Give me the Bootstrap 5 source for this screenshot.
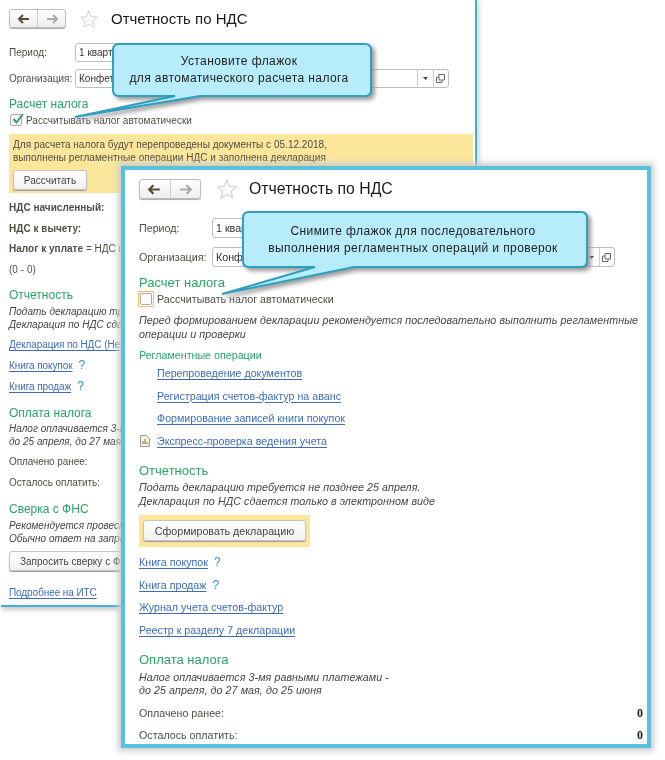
<!DOCTYPE html>
<html lang="ru"><head><meta charset="utf-8"><title>Отчетность по НДС</title>
<link href="https://cdn.jsdelivr.net/npm/bootstrap@5.3.0/dist/css/bootstrap.min.css" rel="stylesheet">
<style>
html,body{margin:0;background:#fff;width:665px;height:760px;overflow:hidden}
body{font-family:"Liberation Sans",Arial,sans-serif;color:#4f4f45;position:relative}
.win{position:absolute;background:#fff;overflow:hidden}
.win-back{left:0;top:0;width:477px;height:607px;font-size:10px;letter-spacing:.02px;padding:9px 0 0 9px;border-right:2px solid #3fb1d6;box-shadow:0 5px 5px -2px #ccc,3px 0 4px #ddd}
.win-back::after{content:"";position:absolute;left:1px;right:0;bottom:0;height:2px;background:#3fb1d6}
.win-front{left:121px;top:166px;width:530px;height:582px;font-size:10.7px;letter-spacing:0;padding:9px 0 0 14px;border:4px solid #5ac1dc;box-shadow:0 0 6px 3px #ccc}
.navgrp{display:flex;width:57px;height:19px;border:1px solid #bdbdbd;border-radius:3px;background:linear-gradient(#fff,#eee);box-shadow:0 1px 1px #aaa}
.win-front .navgrp{width:62px;height:20px}
.navcell{flex:1;display:flex;align-items:center;justify-content:center}
.navcell+.navcell{border-left:1px solid #ccc}
.ttl{color:#1a1a1a;font-size:15px;letter-spacing:0;line-height:19px;margin-left:13px}
.win-front .ttl{font-size:15.8px;margin-left:12px;line-height:20px}
.str{margin-left:14px}
.win-front .str{margin-left:16px}
.frm{height:19px;align-items:center;display:flex}
.frm-lab{width:66px;flex:none}
.win-front .frm-lab{width:73px}
.win-front .frm{height:20px}
.fld{border:1px solid #bdbdbd;border-radius:3px;height:100%;display:flex;align-items:center;padding-left:3px;color:#333;background:#fff}
.fld-s{width:70px}
.fld-l{width:374px;justify-content:space-between;padding:0}
.win-front .fld-l{width:403px}
.fld-l>span:first-child{padding-left:3px}
.fbtn{width:15.5px;height:100%;display:flex;align-items:center;justify-content:center;border-left:1px solid #ccc;flex:none}
.h-sec{color:#2aa564;font-size:12px;line-height:18px;height:18px;letter-spacing:0}
.win-front .h-sec{font-size:13px}
.chk{width:12px;height:12px;border:1px solid #aaa;border-radius:2px;background:#f5f5f5;position:relative;flex:none;margin:0 4px 0 1px}
.chkf{width:16px;height:16px;border:1px solid #e9bd62;padding:1px;margin:0 3px 0 -1px;flex:none;border-radius:1px}
.chkf i{display:block;width:12px;height:12px;border:1px solid #aaa;border-radius:2px;background:#fafafa}
.chkrow{height:14px;display:flex;align-items:center;white-space:nowrap}
.win-front .chkrow{height:16px;margin-top:-1px}
.notice{background:#fbe69c;width:464px;height:59px;padding:4px 0 0 4px;line-height:13px;margin-top:7px}
.bt1c{border:1px solid #c4c4c4;border-radius:3px;background:linear-gradient(#fff,#f1f1f1);box-shadow:0 1px 1px #999;color:#444;text-align:center;padding:0;font:inherit;letter-spacing:inherit;display:block}
.ln{height:20.5px;line-height:20.5px;white-space:nowrap}
.ln21{height:21px;line-height:21px;white-space:nowrap;letter-spacing:-.08px}
.ln22{height:22px;line-height:22px;white-space:nowrap}
.ln23{height:22.67px;line-height:22.67px;white-space:nowrap}
.note{font-style:italic;line-height:13px;color:#444;white-space:nowrap}
.win-front .note{line-height:13.5px;letter-spacing:.07px}
a.lk{color:#3f6db5;text-decoration:underline;text-underline-offset:2px;text-decoration-thickness:1px}
.q{color:#2f8fd0;font-size:12px;margin-left:6px}
.ind{padding-left:18px}
.ico{position:absolute;left:-1px;top:5px}
.val{position:absolute;right:4px;font-family:"Liberation Serif",serif;font-weight:700;color:#222;font-size:12px}
.notebtn{background:#fbe69c;width:171px;height:32px;padding:5px 4px;margin-top:7px}
.sp1{margin-top:1px}.sp3{margin-top:3px}.sp6{margin-top:6px}.sp7{margin-top:7px}.sp8{margin-top:8px}.sp9{margin-top:9px}.sp4{margin-top:4px}
.call{position:absolute;overflow:visible}
.calltxt{position:absolute;text-align:center;color:#222;font-size:12px;line-height:17px;letter-spacing:.4px;white-space:nowrap}
.win,.calltxt{filter:blur(.3px)}
</style></head><body>

<div class="win win-back">
  <div class="d-flex align-items-center">
    <div class="navgrp"><span class="navcell"><svg width="14" height="10" viewBox="0 0 14 10"><path d="M6 1 2 5l4 4M2 5h10" fill="none" stroke="#5a4a3a" stroke-width="2"/></svg></span><span class="navcell"><svg width="14" height="10" viewBox="0 0 14 10"><path d="M8 1l4 4-4 4M12 5H2" fill="none" stroke="#aaa" stroke-width="2"/></svg></span></div>
    <svg class="str" width="18" height="18" viewBox="0 0 18 18"><path d="M9 1l2.400 5.600 6 .5-4.600 4 1.400 6L9 14l-5.200 3.100 1.400-6-4.600-4 6-.5z" fill="#fff" stroke="#d0d0d0"/></svg>
    <span class="ttl">Отчетность по НДС</span>
  </div>
  <div class="frm" style="margin-top:15px"><span class="frm-lab">Период:</span><div class="fld fld-s">1 квартал</div></div>
  <div class="frm sp7"><span class="frm-lab">Организация:</span><div class="fld fld-l"><span>Конфетпром</span><span class="d-flex h-100"><span class="fbtn"><svg width="5" height="3"><path d="M0 0h5L2.500 3z" fill="#444"/></svg></span><span class="fbtn"><svg width="9" height="9" viewBox="0 0 9 9"><path d="M3 .5h5.500V6H3zM.5 3H3M.5 3v5.500H6V6" fill="none" stroke="#666"/></svg></span></span></div></div>
  <div class="h-sec sp7">Расчет налога</div>
  <div class="chkrow"><span class="chk"><svg class="ico" style="left:1px;top:-2px" width="12" height="12" viewBox="0 0 12 12"><path d="M1.500 6l3 3.500L11 1" fill="none" stroke="#2f9e62" stroke-width="2"/></svg></span>Рассчитывать налог автоматически</div>
  <div class="notice">Для расчета налога будут перепроведены документы с 05.12.2018,<br>выполнены регламентные операции НДС и заполнена декларация
    <button type="button" class="bt1c sp6" style="width:74px;height:20px">Рассчитать</button></div>
  <div class="ln fw-bold" style="margin-top:5px">НДС начисленный:</div>
  <div class="ln fw-bold">НДС к вычету:</div>
  <div class="ln"><b>Налог к уплате</b> = НДС начисленный - НДС к вычету</div>
  <div class="ln">(0 - 0)</div>
  <div class="h-sec sp6">Отчетность</div>
  <div class="note sp1">Подать декларацию требуется не позднее 25 апреля.<br>Декларация по НДС сдается только в электронном виде</div>
  <div class="ln21 sp3"><a class="lk" href="#">Декларация по НДС (Не сформирована)</a></div>
  <div class="ln21"><a class="lk" href="#">Книга покупок</a><span class="q">?</span></div>
  <div class="ln21"><a class="lk" href="#">Книга продаж</a><span class="q">?</span></div>
  <div class="h-sec sp7">Оплата налога</div>
  <div class="note">Налог оплачивается 3-мя равными платежами -<br>до 25 апреля, до 27 мая, до 25 июня</div>
  <div class="ln21 sp3">Оплачено ранее:</div>
  <div class="ln21">Осталось оплатить:</div>
  <div class="h-sec sp7">Сверка с ФНС</div>
  <div class="note sp1">Рекомендуется провести сверку с ФНС.<br>Обычно ответ на запрос приходит в течение дня</div>
  <button type="button" class="bt1c sp6" style="width:137px;height:20px">Запросить сверку с ФНС</button>
  <div class="ln21" style="margin-top:11px"><a class="lk" href="#">Подробнее на ИТС</a></div>
</div>

<svg class="call" style="left:70px;top:40px" width="310" height="85" viewBox="70 40 310 85"><path d="M119 44H365q6 0 6 6V90q0 6-6 6H200L75 117 175 96H119q-6 0-6-6V50q0-6 6-6z" fill="#b7ecfb" stroke="#2f9fc0" stroke-width="2" style="filter:drop-shadow(3px 3px 2px #999)"/></svg>
<div class="calltxt" style="left:110px;width:258px;top:53px">Установите флажок<br>для автоматического расчета налога</div>

<div class="win win-front">
  <div class="d-flex align-items-center">
    <div class="navgrp"><span class="navcell"><svg width="15" height="11" viewBox="0 0 14 10"><path d="M6 1 2 5l4 4M2 5h10" fill="none" stroke="#5a4a3a" stroke-width="2"/></svg></span><span class="navcell"><svg width="15" height="11" viewBox="0 0 14 10"><path d="M8 1l4 4-4 4M12 5H2" fill="none" stroke="#aaa" stroke-width="2"/></svg></span></div>
    <svg class="str" width="20" height="20" viewBox="0 0 18 18"><path d="M9 1l2.400 5.600 6 .5-4.600 4 1.400 6L9 14l-5.200 3.100 1.400-6-4.600-4 6-.5z" fill="#fff" stroke="#d0d0d0"/></svg>
    <span class="ttl">Отчетность по НДС</span>
  </div>
  <div class="frm" style="margin-top:19px"><span class="frm-lab">Период:</span><div class="fld fld-s">1 квартал</div></div>
  <div class="frm sp9"><span class="frm-lab">Организация:</span><div class="fld fld-l"><span>Конфетпром</span><span class="d-flex h-100"><span class="fbtn"><svg width="5" height="3"><path d="M0 0h5L2.500 3z" fill="#444"/></svg></span><span class="fbtn"><svg width="9" height="9" viewBox="0 0 9 9"><path d="M3 .5h5.500V6H3zM.5 3H3M.5 3v5.500H6V6" fill="none" stroke="#666"/></svg></span></span></div></div>
  <div class="h-sec sp7">Расчет налога</div>
  <div class="chkrow"><span class="chkf"><i></i></span>Рассчитывать налог автоматически</div>
  <div class="note sp7">Перед формированием декларации рекомендуется последовательно выполнить регламентные<br>операции и проверки</div>
  <div class="sp8" style="color:#2aa564;line-height:13px;height:13px">Регламентные операции</div>
  <div class="ind position-relative">
    <div class="ln23"><a class="lk" href="#">Перепроведение документов</a></div>
    <div class="ln23"><a class="lk" href="#">Регистрация счетов-фактур на аванс</a></div>
    <div class="ln23"><a class="lk" href="#">Формирование записей книги покупок</a></div>
    <div class="ln23 position-relative"><svg class="ico" style="left:-18px" width="11" height="12" viewBox="0 0 11 12"><path d="M1.500.5h6l3 3v8h-9z" fill="#f4f1e6" stroke="#999"/><path d="M4 9V6M6 9V4M8 9V7" stroke="#b8862a" stroke-width="1.300"/></svg><a class="lk" href="#">Экспресс-проверка ведения учета</a></div>
  </div>
  <div class="h-sec sp9">Отчетность</div>
  <div class="note" style="margin-top:1.5px">Подать декларацию требуется не позднее 25 апреля.<br>Декларация по НДС сдается только в электронном виде</div>
  <div class="notebtn"><button type="button" class="bt1c" style="width:163px;height:21px">Сформировать декларацию</button></div>
  <div class="sp4">
    <div class="ln23"><a class="lk" href="#">Книга покупок</a><span class="q">?</span></div>
    <div class="ln23"><a class="lk" href="#">Книга продаж</a><span class="q">?</span></div>
    <div class="ln23"><a class="lk" href="#">Журнал учета счетов-фактур</a></div>
    <div class="ln23"><a class="lk" href="#">Реестр к разделу 7 декларации</a></div>
  </div>
  <div class="h-sec" style="margin-top:9px">Оплата налога</div>
  <div class="note" style="margin-top:2px">Налог оплачивается 3-мя равными платежами -<br>до 25 апреля, до 27 мая, до 25 июня</div>
  <div class="ln22 sp4 position-relative">Оплачено ранее:<span class="val">0</span></div>
  <div class="ln22 position-relative">Осталось оплатить:<span class="val">0</span></div>
</div>

<svg class="call" style="left:215px;top:205px" width="385" height="95" viewBox="215 205 385 95"><path d="M249 212H581q6 0 6 6V261q0 6-6 6H354L222 294 315 267H249q-6 0-6-6V218q0-6 6-6z" fill="#b7ecfb" stroke="#2f9fc0" stroke-width="2" style="filter:drop-shadow(3px 3px 2px #999)"/></svg>
<div class="calltxt" style="left:241px;width:344px;top:223px">Снимите флажок для последовательного<br>выполнения регламентных операций и проверок</div>
<script src="https://cdn.jsdelivr.net/npm/bootstrap@5.3.0/dist/js/bootstrap.bundle.min.js"></script>
</body></html>
